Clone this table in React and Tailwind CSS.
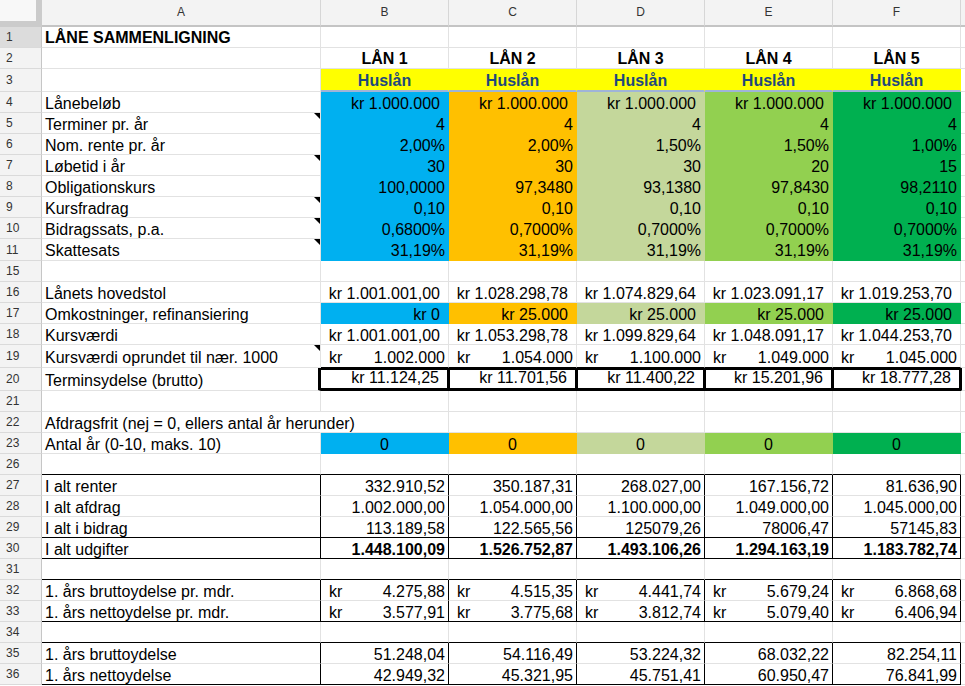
import React from 'react';

const GR = 'border-r border-r-[#e2e2e2]';
const GB = 'border-b border-b-[#e2e2e2]';
const TR = 'border-r border-r-transparent';
const TB = 'border-b border-b-transparent';
const KR = 'border-r border-r-black';
const KB = 'border-b border-b-black';

const COLS = ['bg-[#00b0f0]', 'bg-[#ffc000]', 'bg-[#c4d79b]', 'bg-[#92d050]', 'bg-[#00b050]'];

function Cell({ a, r = GR, b = GB, x = '', c = 'text-black', children }) {
  return (
    <div
      className={`${a ? 'w-[279px]' : 'w-[128px]'} shrink-0 flex items-end whitespace-nowrap leading-[14px] text-[16px] ${c} ${r} ${b} ${x}`}
    >
      {children}
    </div>
  );
}

function Tri() {
  return (
    <div className="absolute top-0 right-0 w-0 h-0 border-l-[6px] border-l-transparent border-t-[6px] border-t-black" />
  );
}

function Label({ t, tri, r = GR, b = GB, x = 'pb-[1px]' }) {
  return (
    <Cell a r={r} b={b} x={`relative pl-[3px] ${x}`}>
      <span>{t}</span>
      {tri && <Tri />}
    </Cell>
  );
}

function Row({ n, h = 'h-[21px]', hb = 'bg-[#f3f3f3]', g = 'border-b border-b-[#e2e2e2]', children }) {
  return (
    <div className={`flex ${h}`}>
      <div
        className={`w-[42px] shrink-0 flex items-center pl-[6px] text-[12px] text-[#333] border-r border-r-[#c6c6c6] border-b border-b-[#dadada] ${hb}`}
      >
        {n}
      </div>
      {children}
      <div className={`flex-1 ${g}`} />
    </div>
  );
}

function ColorRow({ n, label, tri, vals, x = 'justify-end pr-[3px] pb-[1px]' }) {
  return (
    <Row n={n}>
      <Label t={label} tri={tri} />
      {vals.map((v, i) => (
        <Cell key={i} r={TR} b={TB} x={`${COLS[i]} ${x}`}>
          {v}
        </Cell>
      ))}
    </Row>
  );
}

function EmptyRow({ n, b = GB, h }) {
  return (
    <Row n={n} h={h}>
      <Cell a b={b} />
      {[0, 1, 2, 3, 4].map((i) => (
        <Cell key={i} b={b} />
      ))}
    </Row>
  );
}

function BoxRow({ n, label, vals, b = GB, kr, bold }) {
  return (
    <Row n={n}>
      <Label t={label} r={KR} b={b} />
      {vals.map((v, i) =>
        kr ? (
          <Cell key={i} r={KR} b={b} x="justify-between pl-[8px] pr-[3px] pb-[1px]">
            <span>kr</span>
            <span>{v}</span>
          </Cell>
        ) : (
          <Cell key={i} r={KR} b={b} x={`justify-end pr-[3px] pb-[1px] ${bold ? 'font-bold' : ''}`}>
            {v}
          </Cell>
        )
      )}
    </Row>
  );
}

export default function App() {
  const letters = ['A', 'B', 'C', 'D', 'E', 'F'];
  return (
    <div className="w-[965px] h-[686px] overflow-hidden bg-white font-['Liberation_Sans',Arial,sans-serif]">
      {/* column header */}
      <div className="flex h-[27px]">
        <div className="w-[42px] shrink-0 bg-[#f8f8f8] border-r-[6px] border-r-[#cbcbcb] border-b-[6px] border-b-[#cbcbcb]" />
        {letters.map((l, i) => (
          <div
            key={l}
            className={`${i === 0 ? 'w-[279px]' : 'w-[128px]'} shrink-0 flex items-center justify-center pb-[1px] text-[12px] text-[#333] bg-[#f3f3f3] border-r border-r-[#d6d6d6] border-b-2 border-b-[#c4c4c4]`}
          >
            {l}
          </div>
        ))}
        <div className="flex-1 bg-[#f3f3f3] border-b-2 border-b-[#c4c4c4]" />
      </div>

      {/* row 1 */}
      <Row n="1" hb="bg-[#dcdcdc]">
        <Label t="LÅNE SAMMENLIGNING" x="pb-[2px] font-bold" />
        {[0, 1, 2, 3, 4].map((i) => (
          <Cell key={i} />
        ))}
      </Row>

      {/* row 2 */}
      <Row n="2">
        <Cell a />
        {[1, 2, 3, 4, 5].map((i) => (
          <Cell key={i} x="justify-center pb-[2px] font-bold">
            LÅN {i}
          </Cell>
        ))}
      </Row>

      {/* row 3 */}
      <Row n="3" h="h-[23px]">
        <Cell a />
        {[0, 1, 2, 3, 4].map((i) => (
          <Cell
            key={i}
            r={TR}
            b="border-b-2 border-b-[#9fb4d8]"
            c="text-[#1f497d]"
            x="bg-[#ffff00] justify-center pb-[2px] font-bold"
          >
            Huslån
          </Cell>
        ))}
      </Row>

      <ColorRow n="4" label="Lånebeløb" vals={Array(5).fill('kr 1.000.000')} x="justify-end pr-[8px] pb-[1px]" />
      <ColorRow n="5" label="Terminer pr. år" tri vals={Array(5).fill('4')} />
      <ColorRow n="6" label="Nom. rente pr. år" vals={['2,00%', '2,00%', '1,50%', '1,50%', '1,00%']} />
      <ColorRow n="7" label="Løbetid i år" tri vals={['30', '30', '30', '20', '15']} />
      <ColorRow n="8" label="Obligationskurs" vals={['100,0000', '97,3480', '93,1380', '97,8430', '98,2110']} />
      <ColorRow n="9" label="Kursfradrag" tri vals={Array(5).fill('0,10')} />
      <ColorRow n="10" label="Bidragssats, p.a." tri vals={['0,6800%', '0,7000%', '0,7000%', '0,7000%', '0,7000%']} />
      <Row n="11" h="h-[22px]">
        <Label t="Skattesats" tri x="pb-[2px]" />
        {[0, 1, 2, 3, 4].map((i) => (
          <Cell key={i} r={TR} b={TB} x={`${COLS[i]} justify-end pr-[3px] pb-[2px]`}>
            31,19%
          </Cell>
        ))}
      </Row>

      <EmptyRow n="15" />

      <Row n="16">
        <Label t="Lånets hovedstol" />
        {['kr 1.001.001,00', 'kr 1.028.298,78', 'kr 1.074.829,64', 'kr 1.023.091,17', 'kr 1.019.253,70'].map((v, i) => (
          <Cell key={i} x="justify-end pr-[8px] pb-[1px]">
            {v}
          </Cell>
        ))}
      </Row>

      <ColorRow
        n="17"
        label="Omkostninger, refinansiering"
        vals={['kr 0', 'kr 25.000', 'kr 25.000', 'kr 25.000', 'kr 25.000']}
        x="justify-end pr-[8px] pb-[1px]"
      />

      <Row n="18">
        <Label t="Kursværdi" />
        {['kr 1.001.001,00', 'kr 1.053.298,78', 'kr 1.099.829,64', 'kr 1.048.091,17', 'kr 1.044.253,70'].map((v, i) => (
          <Cell key={i} x="justify-end pr-[8px] pb-[1px]">
            {v}
          </Cell>
        ))}
      </Row>

      <Row n="19" h="h-[23px]">
        <Label t="Kursværdi oprundet til nær. 1000" tri x="pb-[2px]" />
        {['1.002.000', '1.054.000', '1.100.000', '1.049.000', '1.045.000'].map((v, i) => (
          <Cell key={i} b={KB} x="justify-between pl-[8px] pr-[3px] pb-[2px]">
            <span>kr</span>
            <span>{v}</span>
          </Cell>
        ))}
      </Row>

      <Row n="20" h="h-[23px]" g="border-b border-b-[#e2e2e2] border-l border-l-black">
        <Label t="Terminsydelse (brutto)" r="border-r-[3px] border-r-black" x="pb-[2px]" />
        {['kr 11.124,25', 'kr 11.701,56', 'kr 11.400,22', 'kr 15.201,96', 'kr 18.777,28'].map((v, i) => (
          <Cell
            key={i}
            r="border-r-2 border-r-black"
            b="border-b-[3px] border-b-black"
            x={`border-t-2 border-t-black justify-end pr-[8px] pb-[3px] ${i > 0 ? 'border-l border-l-black' : ''}`}
          >
            {v}
          </Cell>
        ))}
      </Row>

      <EmptyRow n="21" />

      <Row n="22">
        <Label t="Afdragsfrit (nej = 0, ellers antal år herunder)" r={TR} />
        {[0, 1, 2, 3, 4].map((i) => (
          <Cell key={i} />
        ))}
      </Row>

      <ColorRow n="23" label="Antal år (0-10, maks. 10)" vals={Array(5).fill('0')} x="justify-center pb-[1px]" />

      <EmptyRow n="26" b={KB} />

      <BoxRow n="27" label="I alt renter" vals={['332.910,52', '350.187,31', '268.027,00', '167.156,72', '81.636,90']} />
      <BoxRow n="28" label="I alt afdrag" vals={['1.002.000,00', '1.054.000,00', '1.100.000,00', '1.049.000,00', '1.045.000,00']} />
      <BoxRow n="29" label="I alt i bidrag" b={KB} vals={['113.189,58', '122.565,56', '125079,26', '78006,47', '57145,83']} />
      <BoxRow
        n="30"
        label="I alt udgifter"
        b={KB}
        bold
        vals={['1.448.100,09', '1.526.752,87', '1.493.106,26', '1.294.163,19', '1.183.782,74']}
      />

      <EmptyRow n="31" b={KB} />

      <BoxRow n="32" label="1. års bruttoydelse pr. mdr." kr vals={['4.275,88', '4.515,35', '4.441,74', '5.679,24', '6.868,68']} />
      <BoxRow n="33" label="1. års nettoydelse pr. mdr." kr b={KB} vals={['3.577,91', '3.775,68', '3.812,74', '5.079,40', '6.406,94']} />

      <EmptyRow n="34" b={KB} />

      <BoxRow n="35" label="1. års bruttoydelse" vals={['51.248,04', '54.116,49', '53.224,32', '68.032,22', '82.254,11']} />
      <BoxRow n="36" label="1. års nettoydelse" b={KB} vals={['42.949,32', '45.321,95', '45.751,41', '60.950,47', '76.841,99']} />
    </div>
  );
}
